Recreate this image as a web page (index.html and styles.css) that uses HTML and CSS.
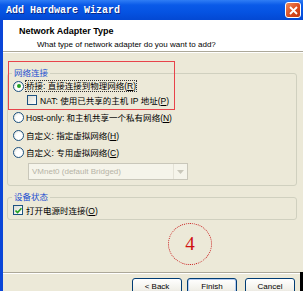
FILE: index.html
```html
<!DOCTYPE html>
<html lang="zh-CN">
<head>
<meta charset="UTF-8">
<title>Add Hardware Wizard</title>
<link rel="stylesheet" href="styles.css">
</head>
<body>

<div class="janela">
  <div class="titulo-barra">
    <span class="titulo-texto">Add Hardware Wizard</span>
    <span class="fechar">
      <svg width="9" height="9" viewBox="0 0 9 9"><path d="M1 1 L8 8 M8 1 L1 8" stroke="#fff" stroke-width="1.8"/></svg>
    </span>
  </div>

  <div class="moldura">
    <div class="cabecalho">
      <div class="cab-titulo">Network Adapter Type</div>
      <div class="cab-sub">What type of network adapter do you want to add?</div>
    </div>
    <div class="linha"></div>

    <div class="corpo">
      <fieldset class="grupo g1">
        <legend>网络连接</legend>
        <div class="opcao r1"><span class="radio marcado"></span><span class="foco">桥接: 直接连接到物理网络(<u>R</u>)</span></div>
        <div class="opcao r2"><span class="check"></span><span>NAT: 使用已共享的主机 IP 地址(<u>P</u>)</span></div>
        <div class="opcao r3"><span class="radio"></span><span>Host-only: 和主机共享一个私有网络(<u>N</u>)</span></div>
        <div class="opcao r4"><span class="radio"></span><span>自定义: 指定虚拟网络(<u>H</u>)</span></div>
        <div class="opcao r5"><span class="radio"></span><span>自定义: 专用虚拟网络(<u>C</u>)</span></div>
        <div class="combo">
          <span class="combo-texto">VMnet0 (default Bridged)</span>
          <span class="combo-seta">
            <svg width="7" height="4" viewBox="0 0 7 4"><path d="M0 0 L7 0 L3.5 4 Z" fill="#c9c7ba"/></svg>
          </span>
        </div>
      </fieldset>

      <fieldset class="grupo g2">
        <legend>设备状态</legend>
        <div class="opcao r6"><span class="check marcado">
          <svg width="7" height="7" viewBox="0 0 7 7"><path d="M0.5 3.5 L2.6 5.6 L6.5 1.2" stroke="#21a121" stroke-width="1.6" fill="none"/></svg>
        </span><span>打开电源时连接(<u>O</u>)</span></div>
      </fieldset>
    </div>

    <div class="rodape">
      <button class="btn">&lt; Back</button>
      <button class="btn padrao">Finish</button>
      <button class="btn">Cancel</button>
      <span class="sombra"></span>
    </div>
  </div>

  <!-- marcas de anotação por cima da captura -->
  <div class="marca-retangulo"></div>
  <div class="marca-circulo">4</div>
</div>

</body>
</html>
```

FILE: styles.css
```css
html, body {
  margin: 0;
  padding: 0;
  background: #ece9d8;
}

.janela {
  position: relative;
  width: 303px;
  height: 291px;
  display: flex;
  flex-direction: column;
  overflow: hidden;
  font-family: "Liberation Sans", "Noto Sans CJK SC", sans-serif;
  font-size: 8.5px;
  color: #000;
}

/* barra de título azul estilo XP */
.titulo-barra {
  height: 20px;
  flex: none;
  display: flex;
  align-items: center;
  justify-content: space-between;
  padding: 0 2px 0 6px;
  background: linear-gradient(#2f7df5 0%, #0a5ae8 25%, #0553e2 60%, #0348d3 100%);
}
.titulo-texto {
  font-family: "Liberation Mono", monospace;
  font-weight: bold;
  font-size: 10px;
  color: #fff;
  text-shadow: 1px 1px 0 #0a2a8a;
}
.fechar {
  width: 14px;
  height: 14px;
  border: 1px solid #fff;
  border-radius: 3px;
  background: linear-gradient(135deg, #f08a5c, #d9481c 60%, #c23a10);
  display: flex;
  align-items: center;
  justify-content: center;
}

.moldura {
  flex: 1;
  display: flex;
  flex-direction: column;
  border-left: 3px solid #0a46d8;
}

.cabecalho {
  height: 31px;
  background: #fff;
  padding: 6px 0 0 16px;
  box-sizing: border-box;
}
.cab-titulo {
  font-weight: bold;
  font-size: 9px;
  line-height: 11px;
}
.cab-sub {
  padding-left: 18px;
  font-size: 8px;
  line-height: 11px;
  margin-top: 2px;
}
.linha {
  border-top: 1px solid #aca899;
  border-bottom: 1px solid #fff;
}

.corpo {
  flex: 1;
  padding: 0 6px 0 4px;
}

.grupo {
  margin: 0;
  padding: 0 0 5px 0;
  border: 1px solid #d0d0bf;
  border-radius: 3px;
}
.grupo legend {
  padding: 0 2px;
  margin-left: 4px;
  color: #1c4fd0;
  font-size: 8.5px;
  line-height: 10px;
}
.g1 { margin-top: 15px; }
.g2 { margin-top: 6px; padding-bottom: 2px; }

.opcao {
  height: 14px;
  display: flex;
  align-items: center;
  gap: 2px;
  padding-left: 5px;
  white-space: nowrap;
}
.opcao u { text-decoration: underline; }
.r1 { margin-top: 1px; }
.r2 { padding-left: 19px; }
.r3 { margin-top: 3px; }
.r4 { margin-top: 4px; }
.r5 { margin-top: 3px; }
.r6 { margin-top: 1px; }

.radio {
  width: 9px;
  height: 9px;
  border: 1px solid #1c5180;
  border-radius: 50%;
  background: radial-gradient(circle at 60% 60%, #fff 40%, #dcdcd2);
  position: relative;
  flex: none;
}
.radio.marcado::after {
  content: "";
  position: absolute;
  left: 2.5px;
  top: 2.5px;
  width: 4px;
  height: 4px;
  border-radius: 50%;
  background: #21a121;
}
.check {
  width: 8px;
  height: 8px;
  border: 1px solid #1c5180;
  background: linear-gradient(135deg, #dcdcd2, #fff);
  flex: none;
  margin-right: 1px;
  display: flex;
  align-items: center;
  justify-content: center;
}
.foco {
  outline: 1px dotted #333;
  line-height: 10px;
}

.combo {
  margin: 4px 0 0 20px;
  width: 160px;
  height: 17px;
  box-sizing: border-box;
  border: 1px solid #c9c7ba;
  background: #f5f4ea;
  display: flex;
  align-items: center;
  justify-content: space-between;
}
.combo-texto {
  color: #b5b3a6;
  padding-left: 3px;
  font-size: 8px;
}
.combo-seta {
  width: 13px;
  height: 15px;
  border-left: 1px solid #e4e2d6;
  display: flex;
  align-items: center;
  justify-content: center;
}

.rodape {
  height: 18px;
  border-top: 1px solid #aca899;
  box-shadow: inset 0 1px 0 #fff;
  display: flex;
  align-items: flex-end;
  padding-left: 129px;
  gap: 5px;
}
.btn {
  width: 50px;
  height: 16px;
  margin-bottom: -3px;
  padding: 0;
  border: 1px solid #003c74;
  border-radius: 3px;
  background: linear-gradient(#fff, #f0efe8 80%, #d6d0c5);
  font-family: "Liberation Sans", sans-serif;
  font-size: 8px;
  color: #000;
}
.btn.padrao {
  box-shadow: inset 0 0 0 1px #b3cbf1, inset 0 -1px 0 1px #8daee8;
  margin-right: 3px;
}
.sombra {
  width: 3px;
  height: 19px;
  background: #000;
  margin-left: auto;
}

/* anotações vermelhas */
.marca-retangulo {
  position: absolute;
  left: 8px;
  top: 61px;
  width: 165px;
  height: 47px;
  border: 1px solid #e8434a;
}
.marca-circulo {
  position: absolute;
  left: 168px;
  top: 223px;
  width: 42px;
  height: 40px;
  border: 1px dotted #c81818;
  border-radius: 50%;
  display: flex;
  align-items: center;
  justify-content: center;
  font-family: "Liberation Serif", serif;
  font-size: 19px;
  color: #d01010;
}
```
